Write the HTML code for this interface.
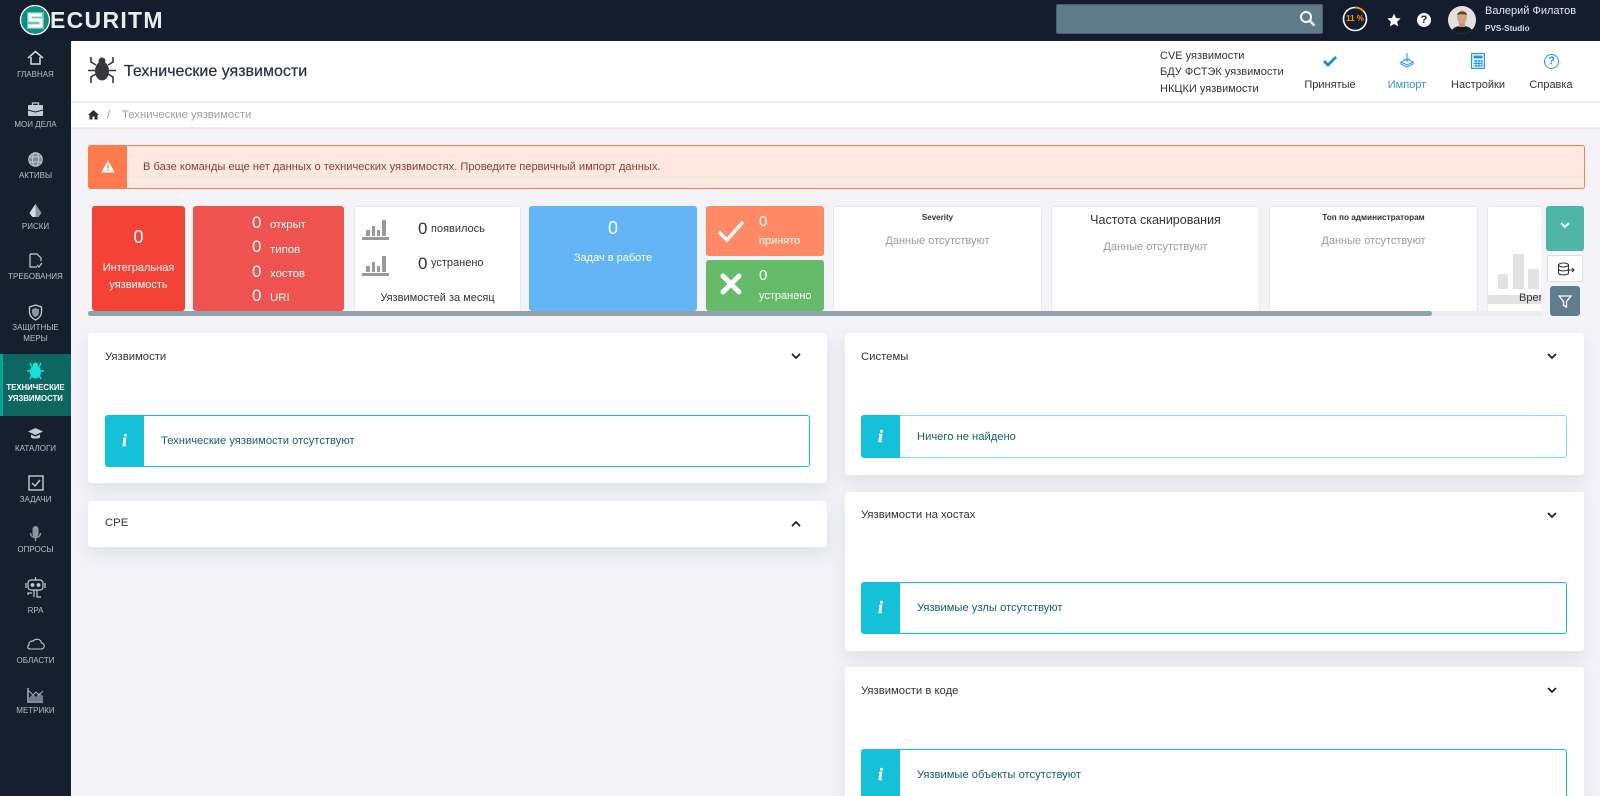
<!DOCTYPE html>
<html lang="ru"><head><meta charset="utf-8"><title>Технические уязвимости</title>
<style>
*{box-sizing:border-box}
html,body{margin:0;padding:0;width:1600px;height:796px;overflow:hidden;background:#f3f3f8;font-family:"Liberation Sans",sans-serif;color:#333}
#root{position:relative;width:1600px;height:796px;overflow:hidden;background:#f3f3f8}
.a{position:absolute}
.t{position:absolute;white-space:nowrap;line-height:14px}
.side{left:0;top:41px;width:71px;height:755px;background:#15202e}
.sl{position:absolute;left:0;width:71px;text-align:center;font-size:8px;line-height:10.500px;color:#b4bfcb;white-space:nowrap}
.si{position:absolute;left:23px;width:25px;height:25px}
.card{position:absolute;border-radius:3px}
.wc{background:#fff;border:1px solid #e8e9ed}
.panel{position:absolute;background:#fff;border-radius:3px;box-shadow:0 8px 18px rgba(170,180,190,.28)}
.info{position:absolute;background:#fff;border:1px solid #15c0d9;border-radius:3px}
.info i.b{position:absolute;left:-1px;top:-1px;bottom:-1px;width:39px;background:#15c0d9;border-radius:3px 0 0 3px}
.info b{position:absolute;left:0;width:37px;text-align:center;top:50%;margin-top:-10px;font:italic bold 17px/20px "Liberation Serif",serif;color:#fff;-webkit-text-stroke:.5px #fff}
.info span{position:absolute;left:55px;top:50%;margin-top:-7px;font-size:11.200px;line-height:14px;color:#17606f;white-space:nowrap}
.pt{font-size:11.300px;color:#333}
.w{color:#fff}
.d{font-size:17px;line-height:18px}
.cl{font-size:11.400px}
</style></head><body><div id="root">

<div class="a" style="left:0;top:0;width:1600px;height:41px;background:#141d2e"></div>
<!-- logo -->
<svg class="a" style="left:19px;top:4px" width="32" height="32" viewBox="0 0 32 32"><circle cx="16" cy="16" r="14.500" fill="#0f8f7f" stroke="#fff" stroke-width="1.300"/><rect x="8" y="8" width="17" height="17" fill="#6fc0b6"/><path d="M23 11H11v5h11v6H9" fill="none" stroke="#fff" stroke-width="3.200"/></svg>
<div class="t w" style="left:50px;top:8px;font-size:23px;line-height:25px;font-weight:bold;letter-spacing:1.300px;color:#e8eeee">ECURITM</div>
<!-- search -->
<div class="a" style="left:1056px;top:4px;width:267px;height:30px;background:#5f7b88;border:1px solid #4b5f6d;border-radius:2px"></div>
<svg class="a" style="left:1299px;top:10px" width="17" height="17" viewBox="0 0 17 17"><circle cx="7" cy="7" r="5" fill="none" stroke="#fff" stroke-width="2"/><path d="M11 11l4.500 4.500" stroke="#fff" stroke-width="2.400"/></svg>
<!-- progress -->
<svg class="a" style="left:1342px;top:6px" width="26" height="26" viewBox="0 0 26 26"><circle cx="13" cy="13" r="11.500" fill="none" stroke="#fff" stroke-width="1.600"/><path d="M13 1.500A11.500 11.500 0 0 1 21.500 5.200" fill="none" stroke="#ff9800" stroke-width="1.800"/></svg>
<div class="t" style="left:1342px;top:12px;width:26px;text-align:center;font-size:8px;font-weight:bold;color:#ff9800">11 %</div>
<svg class="a" style="left:1387px;top:13px" width="14" height="14" viewBox="0 0 24 24"><path d="M12 1l3.400 7.500 8 .9-6 5.500 1.700 8L12 18.800 4.900 22.900l1.700-8-6-5.500 8-.9z" fill="#fff"/></svg>
<div class="a" style="left:1417px;top:13px;width:14px;height:14px;border-radius:50%;background:#fff;color:#141d2e;font-size:11px;font-weight:bold;line-height:14px;text-align:center">?</div>
<!-- avatar -->
<svg class="a" style="left:1448px;top:6px" width="28" height="28" viewBox="0 0 28 28"><defs><clipPath id="c"><circle cx="14" cy="14" r="14"/></clipPath></defs><g clip-path="url(#c)"><rect width="28" height="28" fill="#e3e1df"/><path d="M3 28c0-6 5-8 11-8s11 2 11 8z" fill="#161a22"/><rect x="11" y="15" width="6" height="6" fill="#c79478"/><ellipse cx="14" cy="11" rx="5" ry="6.500" fill="#d4a284"/><path d="M9 9c0-4 10-5 10 0-3-1-7-1-10 0z" fill="#5a4130"/></g></svg>
<div class="t" style="left:1485px;top:4px;font-size:11px;color:#e4e9f0">Валерий Филатов</div>
<div class="t" style="left:1485px;top:22px;font-size:8.200px;font-weight:bold;color:#d6dde6">PVS-Studio</div>

<!-- sidebar -->
<div class="a side"></div>
<div class="a" style="left:0;top:354px;width:71px;height:62px;background:#0e6660"></div>
<div class="a" style="left:0;top:354px;width:3px;height:62px;background:#0aa28f"></div>

<svg class="si" style="top:46px" viewBox="0 0 25 25" fill="none" stroke="#d3dae1" stroke-width="1.500"><path d="M5 12l7.500-6.500L20 12"/><path d="M8 11v7h9v-7"/></svg>
<div class="sl" style="top:70px">ГЛАВНАЯ</div>
<svg class="si" style="top:97px" viewBox="0 0 25 25"><path d="M9.500 8V6h6v2" fill="none" stroke="#c3ccd6" stroke-width="1.300"/><rect x="5" y="8" width="15" height="11" rx="1" fill="#c3ccd6"/><path d="M5 13l7.500 2 7.500-2" fill="none" stroke="#15202e"/></svg>
<div class="sl" style="top:120px">МОИ ДЕЛА</div>
<svg class="si" style="top:147px" viewBox="0 0 25 25" fill="#7f8a97" stroke="#c3ccd6" stroke-width="1"><circle cx="12.500" cy="12.500" r="6.800"/><ellipse cx="12.500" cy="12.500" rx="3.200" ry="6.800" fill="none"/><path d="M6 10h13M6 15h13" fill="none"/></svg>
<div class="sl" style="top:171px">АКТИВЫ</div>
<svg class="si" style="top:199px" viewBox="0 0 25 25"><path d="M12.500 5l6 9-3 4h-6l-3-4z" fill="#8c97a3"/><path d="M12.500 5l-6 9 3 4h3z" fill="#d4dbe2"/></svg>
<div class="sl" style="top:222px">РИСКИ</div>
<svg class="si" style="top:248px" viewBox="0 0 25 25" fill="none" stroke="#c3ccd6" stroke-width="1.200"><path d="M7 6h7l4 4v3M7 6v13h7"/><path d="M14 17l2 2 3-4"/></svg>
<div class="sl" style="top:272px">ТРЕБОВАНИЯ</div>
<svg class="si" style="top:300px" viewBox="0 0 25 25"><path d="M12.500 5l6 2v5c0 4-3 6.500-6 8-3-1.500-6-4-6-8V7z" fill="none" stroke="#c3ccd6" stroke-width="1.300"/><path d="M12.500 8l3.500 1.200v3c0 2.500-1.800 4-3.500 5-1.700-1-3.500-2.500-3.500-5v-3z" fill="#8c97a3"/></svg>
<div class="sl" style="top:323px">ЗАЩИТНЫЕ<br>МЕРЫ</div>

<svg class="si" style="top:358px" viewBox="0 0 25 25"><ellipse cx="12.500" cy="14" rx="5.500" ry="6.500" fill="#18e0e0"/><circle cx="12.500" cy="7" r="2.500" fill="#18e0e0"/><path d="M7 5l2 4M18 5l-2 4M4 13h4M17 13h4M7 21l2-4M18 21l-2-4" stroke="#18e0e0" stroke-width="1.400"/></svg>
<div class="sl" style="top:383px;color:#fff;font-weight:bold;font-size:7.800px">ТЕХНИЧЕСКИЕ<br>УЯЗВИМОСТИ</div>

<svg class="si" style="top:421px" viewBox="0 0 25 25"><path d="M12.500 7L20 10.500 12.500 14 5 10.500z" fill="#c3ccd6"/><path d="M8 13.500v3c1.500 1.500 7.500 1.500 9 0v-3l-4.500 2z" fill="#c3ccd6"/></svg>
<div class="sl" style="top:444px">КАТАЛОГИ</div>
<svg class="si" style="top:471px" viewBox="0 0 25 25" fill="none" stroke="#c3ccd6" stroke-width="1.400"><rect x="6" y="5" width="14" height="14"/><path d="M9 12l3 3 5-6"/></svg>
<div class="sl" style="top:495px">ЗАДАЧИ</div>
<svg class="si" style="top:521px" viewBox="0 0 25 25"><rect x="9.500" y="5" width="6" height="11" rx="3" fill="#8c97a3"/><path d="M7.500 12c0 6 10 6 10 0M12.500 17v3" fill="none" stroke="#8c97a3" stroke-width="1.400"/></svg>
<div class="sl" style="top:545px">ОПРОСЫ</div>
<svg class="a" style="left:23px;top:575px" width="25" height="25" viewBox="0 0 25 25" fill="none" stroke="#c3ccd6" stroke-width="1.200"><rect x="5" y="5" width="15" height="10" rx="3"/><circle cx="9.500" cy="10" r="1.300" fill="#c3ccd6"/><circle cx="15.500" cy="10" r="1.300" fill="#c3ccd6"/><path d="M12.500 5V2M3 8v5M22 8v5M11 15v7M14 15v7h4M9 18H5v2"/></svg>
<div class="sl" style="top:606px">RPA</div>
<svg class="si" style="top:632px" viewBox="0 0 25 25" fill="none" stroke="#c3ccd6" stroke-width="1.100"><path d="M7 17h11a3 3 0 0 0 .5-6c-.5-4-6-5-8-2-3-.5-5 1.500-4.500 4-2 1-1.500 4 1 4z"/></svg>
<div class="sl" style="top:656px">ОБЛАСТИ</div>
<svg class="si" style="top:683px" viewBox="0 0 25 25"><path d="M6 15l4-4 3 3 3-4 4 3v5H6z" fill="#6f7c90"/><path d="M5 5v14h15" fill="none" stroke="#a6b0bd" stroke-width="1.500"/><path d="M6 8l4 4 3-3 3 3 4-4" fill="none" stroke="#a6b0bd"/></svg>
<div class="sl" style="top:706px">МЕТРИКИ</div>

<!-- header -->
<div class="a" style="left:71px;top:41px;width:1529px;height:60px;background:#fff"></div>
<div class="a" style="left:71px;top:103px;width:1529px;height:24px;background:#fff"></div>
<div class="a" style="left:71px;top:101px;width:1529px;height:2px;background:#eeeef2"></div>
<div class="a" style="left:71px;top:127px;width:1529px;height:2px;background:#e9eaef"></div>
<svg class="a" style="left:88px;top:56px" width="28" height="28" viewBox="0 0 28 28"><ellipse cx="14" cy="15" rx="7" ry="9.500" fill="#38363a"/><circle cx="14" cy="5" r="3.500" fill="#38363a"/><path d="M3 1v5l5 3M25 1v5l-5 3M0 14.500h7M28 14.500h-7M3 27v-6l5-3M25 27v-6l-5-3" fill="none" stroke="#38363a" stroke-width="1.600"/></svg>
<div class="t" style="left:124px;top:63px;font-size:16px;line-height:18px;color:#29303a;-webkit-text-stroke:.2px #29303a">Технические уязвимости</div>
<div class="t" style="left:1160px;top:49px;font-size:11px">CVE уязвимости</div>
<div class="t" style="left:1160px;top:65px;font-size:11px">БДУ ФСТЭК уязвимости</div>
<div class="t" style="left:1160px;top:82px;font-size:11px">НКЦКИ уязвимости</div>

<svg class="a" style="left:1322px;top:54px" width="16" height="14" viewBox="0 0 16 14"><path d="M2 7l4 4 8-8" fill="none" stroke="#1e88e5" stroke-width="2.800"/></svg>
<div class="t" style="left:1290px;width:80px;top:78px;text-align:center;font-size:11px">Принятые</div>
<svg class="a" style="left:1399px;top:52px" width="16" height="18" viewBox="0 0 16 18" fill="none" stroke="#42a5f5" stroke-width="1.200"><path d="M8 1v8M5.500 6.500L8 9l2.500-2.500"/><path d="M2 10l6-3 6 3-6 3z"/><path d="M2 10v2l6 3 6-3v-2"/></svg>
<div class="t" style="left:1367px;width:80px;top:78px;text-align:center;font-size:11px;color:#3a8fd6">Импорт</div>
<svg class="a" style="left:1471px;top:53px" width="14" height="16" viewBox="0 0 14 16"><rect x=".6" y=".6" width="12.800" height="14.800" fill="none" stroke="#2196f3" stroke-width="1.200"/><rect x="2.500" y="2.500" width="9" height="3" fill="#2196f3"/><path d="M2.500 8h9M2.500 10.500h9M2.500 13h9M5 7v7M8 7v7M11 7v7" stroke="#2196f3" stroke-width="1.100"/></svg>
<div class="t" style="left:1438px;width:80px;top:78px;text-align:center;font-size:11px">Настройки</div>
<div class="a" style="left:1544px;top:54px;width:15px;height:15px;border:1.300px solid #2196f3;border-radius:50%;color:#2196f3;font-size:11px;font-weight:bold;line-height:12.500px;text-align:center">?</div>
<div class="t" style="left:1511px;width:80px;top:78px;text-align:center;font-size:11px">Справка</div>

<!-- breadcrumb -->
<svg class="a" style="left:88px;top:109px" width="11" height="11" viewBox="0 0 11 11"><path d="M5.500 1L0 6h1.500v4.500h3V7.500h2v3h3V6H11z" fill="#2a3038"/></svg>
<div class="t" style="left:107px;top:108px;font-size:11px;color:#8f949a">/</div>
<div class="t" style="left:122px;top:108px;font-size:11.300px;color:#9aa0a6">Технические уязвимости</div>

<!-- alert -->
<div class="a" style="left:88px;top:145px;width:1497px;height:44px;background:#ffe8e0;border:1px solid #ff7a4c;border-radius:3px"></div>
<div class="a" style="left:88px;top:145px;width:39px;height:44px;background:#ff7a4c;border-radius:3px 0 0 3px"></div>
<svg class="a" style="left:101px;top:160px" width="14" height="13" viewBox="0 0 14 13"><path d="M7 .5l6.800 12H.2z" fill="#fff"/><path d="M7 4.500v4M7 9.500v1.500" stroke="#ff7a4c" stroke-width="1.400"/></svg>
<div class="t" style="left:143px;top:160px;font-size:11.100px;color:#8a4030">В базе команды еще нет данных о технических уязвимостях. Проведите первичный импорт данных.</div>

<!-- cards -->
<div class="card" style="left:92px;top:206px;width:93px;height:105px;background:#f44336"></div>
<div class="t w" style="left:92px;width:93px;top:227px;line-height:20px;text-align:center;font-size:18px">0</div>
<div class="t w" style="left:92px;width:93px;top:260px;line-height:17px;text-align:center;font-size:11px;white-space:normal">Интегральная<br>уязвимость</div>

<div class="card" style="left:193px;top:206px;width:151px;height:105px;background:#ef5350"></div>
<div class="t w d" style="left:252px;top:214px">0</div><div class="t w cl" style="left:270px;top:218px">открыт</div>
<div class="t w d" style="left:252px;top:238px">0</div><div class="t w cl" style="left:270px;top:243px">типов</div>
<div class="t w d" style="left:252px;top:263px">0</div><div class="t w cl" style="left:270px;top:267px">хостов</div>
<div class="t w d" style="left:252px;top:287px">0</div><div class="t w cl" style="left:270px;top:291px">URI</div>

<div class="card wc" style="left:354px;top:206px;width:167px;height:106px"></div>
<svg class="a" style="left:362px;top:216px" width="28" height="24" viewBox="0 0 28 24"><path d="M4 14v6h4v-6zM10 10v10h3v-10zM15 14v6h3v-6zM20 4v16h4V4z" fill="#9a9a9a"/><rect x="0" y="21" width="27" height="3" fill="#9a9a9a"/></svg>
<svg class="a" style="left:362px;top:252px" width="28" height="24" viewBox="0 0 28 24"><path d="M4 14v6h4v-6zM10 10v10h3v-10zM15 14v6h3v-6zM20 4v16h4V4z" fill="#9a9a9a"/><rect x="0" y="21" width="27" height="3" fill="#9a9a9a"/></svg>
<div class="t d" style="left:418px;top:220px">0</div><div class="t" style="left:431px;top:222px;font-size:11px">появилось</div>
<div class="t d" style="left:418px;top:255px">0</div><div class="t" style="left:431px;top:256px;font-size:11px">устранено</div>
<div class="t" style="left:354px;width:167px;top:291px;text-align:center;font-size:11px">Уязвимостей за месяц</div>

<div class="card" style="left:529px;top:206px;width:168px;height:105px;background:#64b5f6"></div>
<div class="t w" style="left:529px;width:168px;top:218px;line-height:20px;text-align:center;font-size:18px">0</div>
<div class="t w" style="left:529px;width:168px;top:251px;text-align:center;font-size:11px">Задач в работе</div>

<div class="card" style="left:706px;top:206px;width:118px;height:50px;background:#ff8a65"></div>
<svg class="a" style="left:717px;top:219px" width="28" height="24" viewBox="0 0 28 24"><path d="M2 13l8 8L26 3" fill="none" stroke="#fff" stroke-width="3.400"/></svg>
<div class="t w" style="left:759px;top:213px;line-height:18px;font-size:15px">0</div>
<div class="t w" style="left:759px;top:234px;font-size:11px">принято</div>
<div class="card" style="left:706px;top:260px;width:118px;height:51px;background:#66bb6a"></div>
<svg class="a" style="left:719px;top:272px" width="24" height="24" viewBox="0 0 24 24"><path d="M4 4l16 16M20 4L4 20" fill="none" stroke="#fff" stroke-width="5" stroke-linecap="round"/></svg>
<div class="t w" style="left:759px;top:267px;line-height:18px;font-size:15px">0</div>
<div class="t w" style="left:759px;top:289px;font-size:11px">устранено</div>

<div class="card wc" style="left:833px;top:206px;width:209px;height:106px"></div>
<div class="t" style="left:833px;width:209px;top:211px;text-align:center;font-size:8px;font-weight:bold">Severity</div>
<div class="t" style="left:833px;width:209px;top:234px;text-align:center;font-size:11px;color:#9a9a9a">Данные отсутствуют</div>
<div class="card wc" style="left:1051px;top:206px;width:209px;height:106px"></div>
<div class="t" style="left:1051px;width:209px;top:213px;text-align:center;font-size:12.500px">Частота сканирования</div>
<div class="t" style="left:1051px;width:209px;top:240px;text-align:center;font-size:11px;color:#9a9a9a">Данные отсутствуют</div>
<div class="card wc" style="left:1269px;top:206px;width:209px;height:106px"></div>
<div class="t" style="left:1269px;width:209px;top:211px;text-align:center;font-size:8.200px;font-weight:bold">Топ по администраторам</div>
<div class="t" style="left:1269px;width:209px;top:234px;text-align:center;font-size:11px;color:#9a9a9a">Данные отсутствуют</div>
<div class="card wc" style="left:1487px;top:206px;width:70px;height:106px"></div>
<div class="a" style="left:1498px;top:274px;width:10px;height:15px;background:#e2e2e2"></div>
<div class="a" style="left:1513px;top:254px;width:11px;height:35px;background:#e2e2e2"></div>
<div class="a" style="left:1528px;top:269px;width:11px;height:20px;background:#e2e2e2"></div>
<div class="a" style="left:1488px;top:295px;width:54px;height:9px;background:#e2e2e2"></div>
<div class="t" style="left:1519px;top:291px;font-size:11px">Время</div>
<div class="a" style="left:1541px;top:200px;width:59px;height:122px;background:#f3f3f8"></div>

<div class="a" style="left:88px;top:311px;width:1454px;height:5px;background:#eceef1"></div>
<div class="a" style="left:88px;top:311px;width:1344px;height:5px;background:#90a4ae;border-radius:3px"></div>

<div class="a" style="left:1546px;top:206px;width:38px;height:45px;background:#4db6a6;border-radius:3px"></div>
<svg class="a" style="left:1559px;top:221px" width="12" height="9" viewBox="0 0 12 9"><path d="M2 2l4 4 4-4" fill="none" stroke="#fff" stroke-width="2"/></svg>
<div class="a" style="left:1547px;top:255px;width:36px;height:27px;background:#fff;border:1px solid #dcdde2;border-radius:2px"></div>
<svg class="a" style="left:1557px;top:262px" width="18" height="14" viewBox="0 0 18 14" fill="none" stroke="#333" stroke-width="1.100"><ellipse cx="6.500" cy="3" rx="5" ry="2"/><path d="M1.500 3v8c0 2.500 10 2.500 10 0V3M1.500 7c0 2.500 10 2.500 10 0"/><path d="M10 8h7M15 6l2 2-2 2"/></svg>
<div class="a" style="left:1550px;top:286px;width:30px;height:30px;background:#607d8b;border-radius:3px"></div>
<svg class="a" style="left:1558px;top:295px" width="14" height="13" viewBox="0 0 14 13"><path d="M1 1h12L8.500 6.500V12l-3-1.500v-4z" fill="none" stroke="#fff" stroke-width="1.300"/></svg>

<!-- left panels -->
<div class="panel" style="left:88px;top:333px;width:739px;height:150px"></div>
<div class="t pt" style="left:105px;top:350px">Уязвимости</div>
<svg class="a" style="left:790px;top:352px" width="12" height="9" viewBox="0 0 12 9"><path d="M2 2l4 4 4-4" fill="none" stroke="#222" stroke-width="1.800"/></svg>
<div class="info" style="left:105px;top:415px;width:705px;height:52px"><i class="b"></i><b>i</b><span>Технические уязвимости отсутствуют</span></div>

<div class="panel" style="left:88px;top:501px;width:739px;height:46px"></div>
<div class="t pt" style="left:105px;top:516px">CPE</div>
<svg class="a" style="left:790px;top:519px" width="12" height="9" viewBox="0 0 12 9"><path d="M2 7l4-4 4 4" fill="none" stroke="#222" stroke-width="1.800"/></svg>

<!-- right panels -->
<div class="panel" style="left:845px;top:333px;width:739px;height:142px"></div>
<div class="t pt" style="left:861px;top:350px">Системы</div>
<svg class="a" style="left:1546px;top:352px" width="12" height="9" viewBox="0 0 12 9"><path d="M2 2l4 4 4-4" fill="none" stroke="#222" stroke-width="1.800"/></svg>
<div class="info" style="left:861px;top:415px;width:706px;height:43px;border-color:#7fdfec"><i class="b"></i><b>i</b><span>Ничего не найдено</span></div>

<div class="panel" style="left:845px;top:492px;width:739px;height:159px"></div>
<div class="t pt" style="left:861px;top:508px">Уязвимости на хостах</div>
<svg class="a" style="left:1546px;top:511px" width="12" height="9" viewBox="0 0 12 9"><path d="M2 2l4 4 4-4" fill="none" stroke="#222" stroke-width="1.800"/></svg>
<div class="info" style="left:861px;top:582px;width:706px;height:52px"><i class="b"></i><b>i</b><span>Уязвимые узлы отсутствуют</span></div>

<div class="panel" style="left:845px;top:667px;width:739px;height:140px"></div>
<div class="t pt" style="left:861px;top:684px">Уязвимости в коде</div>
<svg class="a" style="left:1546px;top:686px" width="12" height="9" viewBox="0 0 12 9"><path d="M2 2l4 4 4-4" fill="none" stroke="#222" stroke-width="1.800"/></svg>
<div class="info" style="left:861px;top:749px;width:706px;height:52px"><i class="b"></i><b>i</b><span>Уязвимые объекты отсутствуют</span></div>

</div></body></html>
